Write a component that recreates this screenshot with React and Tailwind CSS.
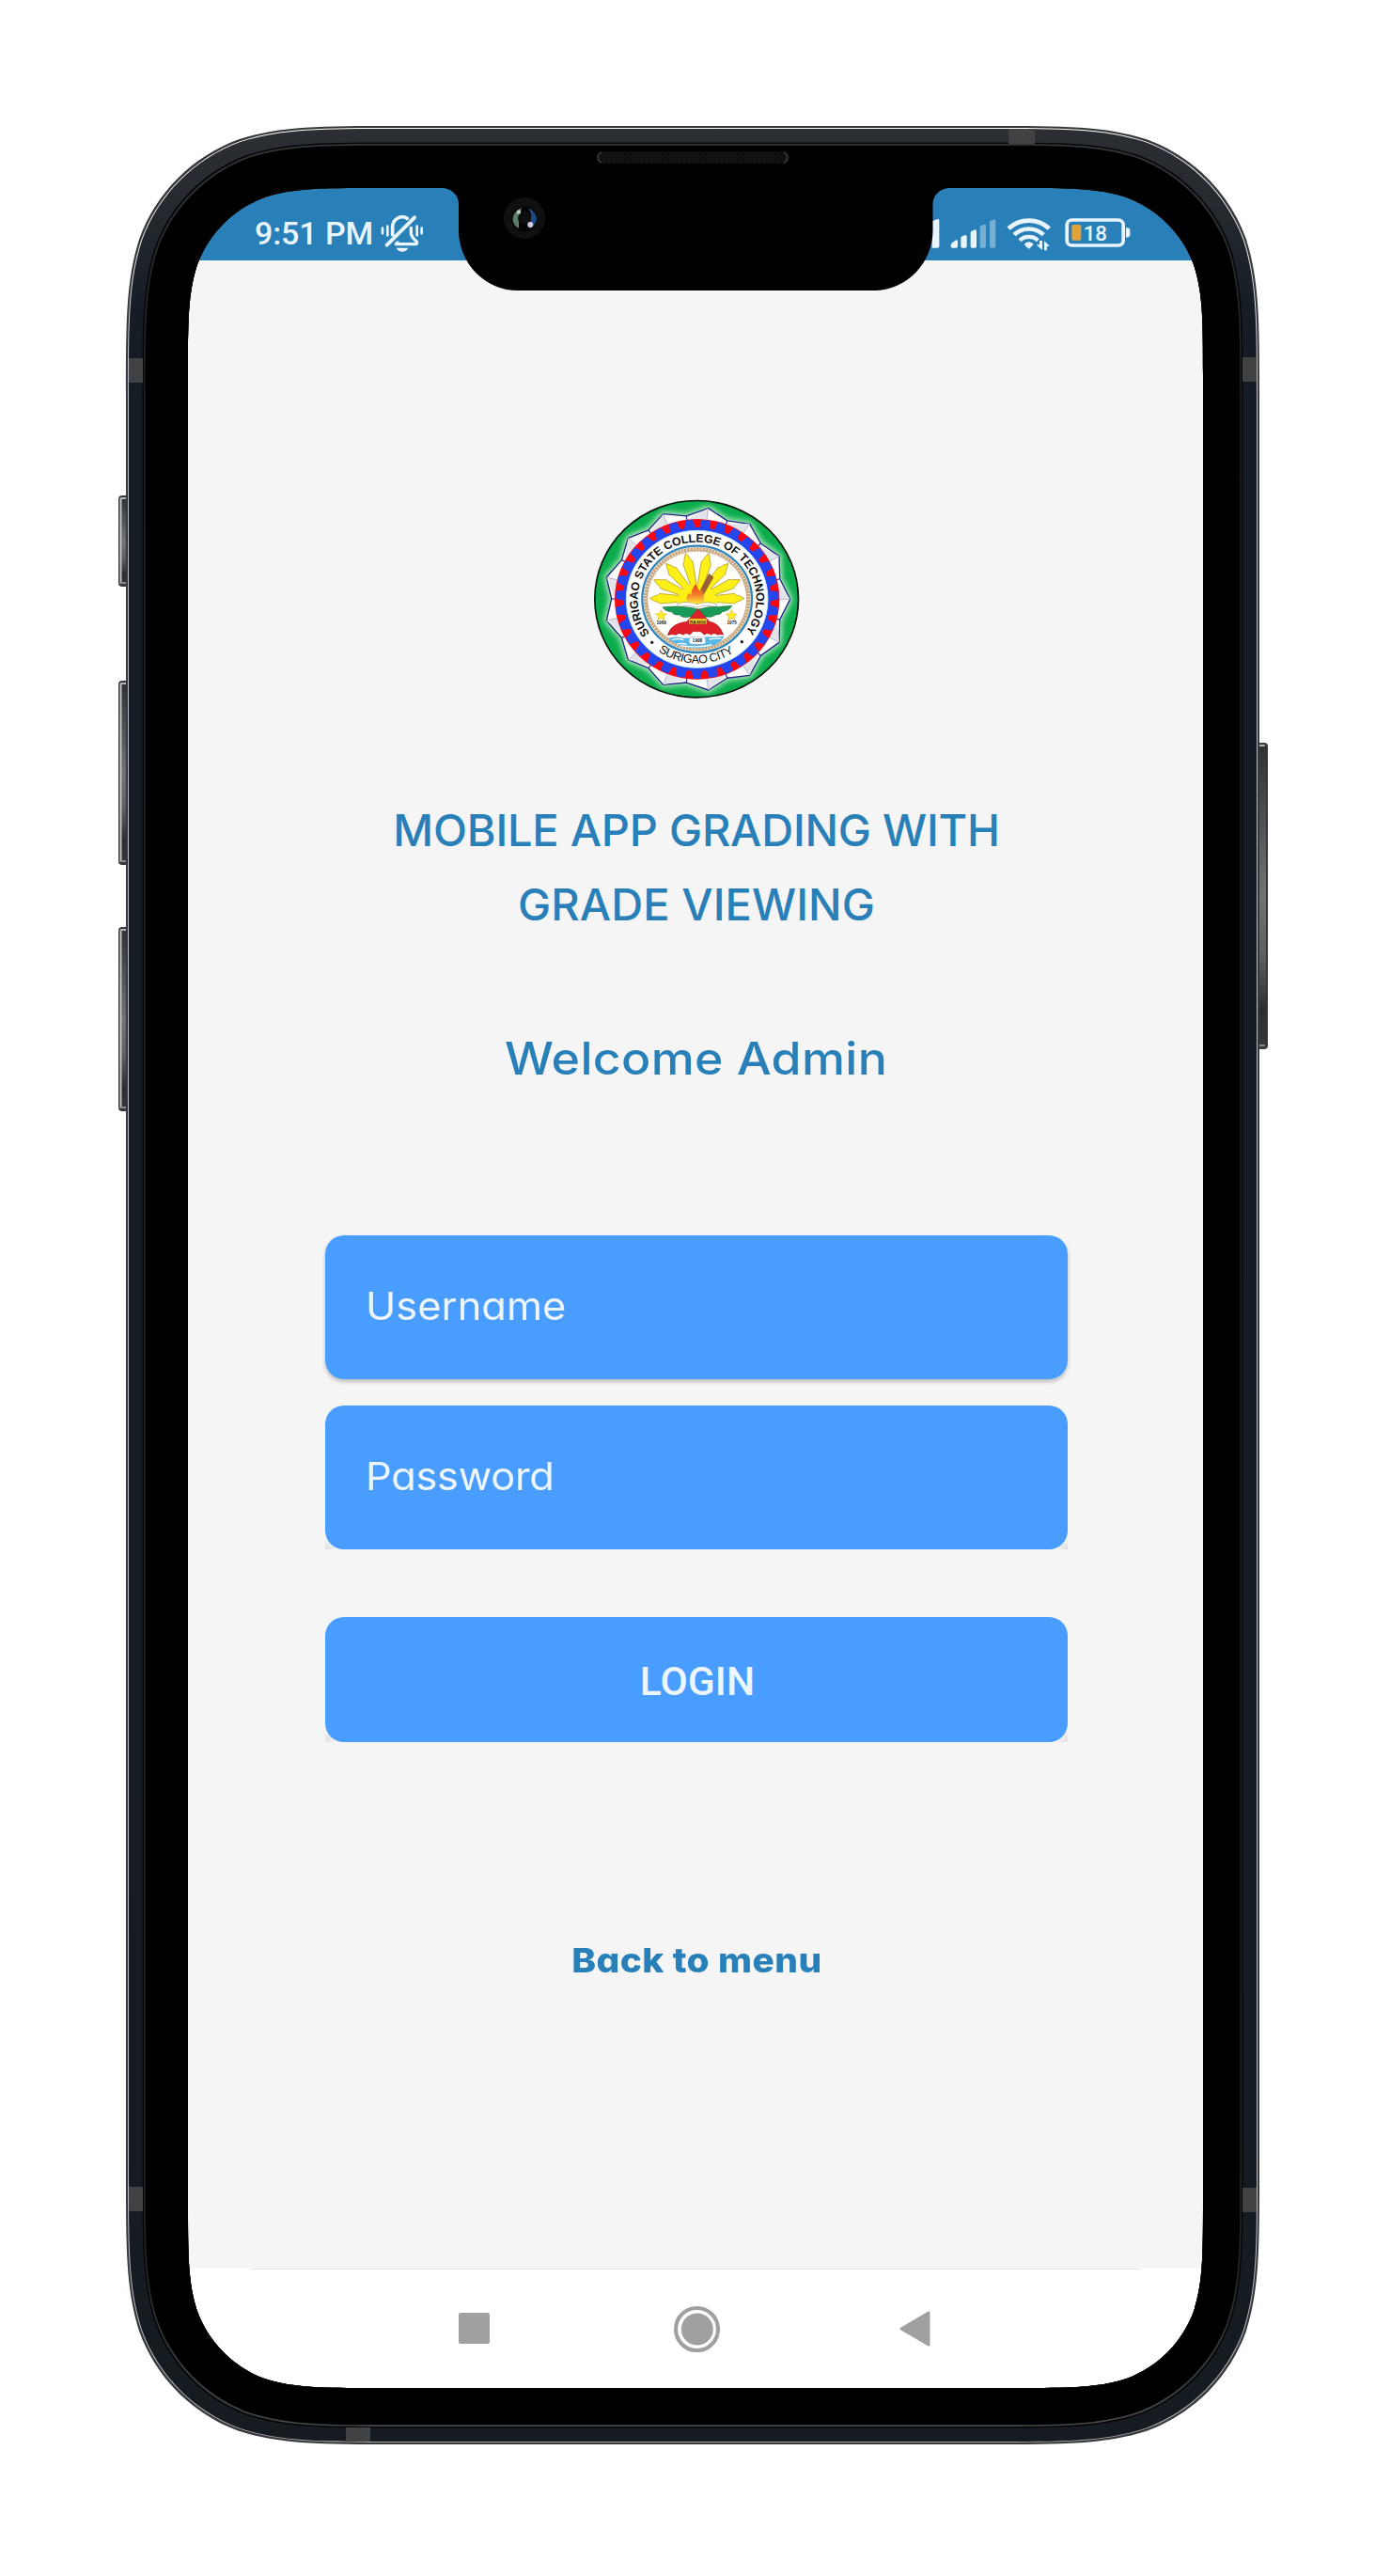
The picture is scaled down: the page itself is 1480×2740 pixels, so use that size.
const K = 1.52866498;

// Continuous-curvature rounded rectangle.
function smoothRect(x, y, w, h, r) {
  const R = x + w;
  const B = y + h;
  const a = K * r;
  const b = 1.08849296 * r;
  const c = 0.86840694 * r;
  const d = 0.63149379 * r;
  const e = 0.07491139 * r;
  const f = 0.37282383 * r;
  const g = 0.16905956 * r;
  return [
    `M${x + a} ${y}L${R - a} ${y}`,
    `C${R - b} ${y} ${R - c} ${y} ${R - d} ${y + e}`,
    `C${R - f} ${y + g} ${R - g} ${y + f} ${R - e} ${y + d}`,
    `C${R} ${y + c} ${R} ${y + b} ${R} ${y + a}`,
    `L${R} ${B - a}`,
    `C${R} ${B - b} ${R} ${B - c} ${R - e} ${B - d}`,
    `C${R - g} ${B - f} ${R - f} ${B - g} ${R - d} ${B - e}`,
    `C${R - c} ${B} ${R - b} ${B} ${R - a} ${B}`,
    `L${x + a} ${B}`,
    `C${x + b} ${B} ${x + c} ${B} ${x + d} ${B - e}`,
    `C${x + f} ${B - g} ${x + g} ${B - f} ${x + e} ${B - d}`,
    `C${x} ${B - c} ${x} ${B - b} ${x} ${B - a}`,
    `L${x} ${y + a}`,
    `C${x} ${y + b} ${x} ${y + c} ${x + e} ${y + d}`,
    `C${x + g} ${y + f} ${x + f} ${y + g} ${x + d} ${y + e}`,
    `C${x + c} ${y} ${x + b} ${y} ${x + a} ${y}Z`,
  ].join("");
}

const SCREEN = smoothRect(200, 200, 1080, 2340, 130);

function SideButton({ x, y, w, h, left }) {
  return (
    <g>
      <rect x={x} y={y} width={w} height={h} rx="4" fill="#38383a" />
      <rect x={left ? x + 1.5 : x} y={y + 2} width={w - 2} height={h - 4} rx="2.5" fill="url(#btnShade)" />
      {left && <rect x={x + 1.5} y={y + 3} width="2" height={h - 6} fill="#c4c4c4" />}
      <rect x={left ? x + 2 : x} y={y + 2} width={w - 3} height="2" rx="1" fill="#b5b5b5" />
      <rect x={left ? x + 2 : x} y={y + h - 5} width={w - 3} height="2" rx="1" fill="#8b8b8b" />
    </g>
  );
}

function PhoneFrame() {
  return (
    <svg className="pointer-events-none absolute inset-0" width="1480" height="2740" viewBox="0 0 1480 2740">
      <defs>
        <linearGradient id="band" x1="0" y1="134" x2="0" y2="2600" gradientUnits="userSpaceOnUse">
          <stop offset="0" stopColor="#2b2e33" />
          <stop offset="0.035" stopColor="#26292f" />
          <stop offset="0.08" stopColor="#161c25" />
          <stop offset="1" stopColor="#161b22" />
        </linearGradient>
        <linearGradient id="btnShade" x1="0" y1="0" x2="0" y2="1">
          <stop offset="0" stopColor="#303032" />
          <stop offset="0.3" stopColor="#56575a" />
          <stop offset="0.5" stopColor="#737373" />
          <stop offset="0.7" stopColor="#5e5e60" />
          <stop offset="0.88" stopColor="#2c2c2e" />
          <stop offset="1" stopColor="#38383a" />
        </linearGradient>
        <linearGradient id="glint" x1="0" y1="134" x2="0" y2="2600" gradientUnits="userSpaceOnUse">
          <stop offset="0" stopColor="#ffffff" />
          <stop offset="0.05" stopColor="#dfe3e3" />
          <stop offset="0.12" stopColor="#b9bbcd" />
          <stop offset="0.9" stopColor="#b9bbcd" />
          <stop offset="1" stopColor="#a5a5a5" />
        </linearGradient>
        <linearGradient id="lip" x1="0" y1="153" x2="0" y2="2582" gradientUnits="userSpaceOnUse">
          <stop offset="0" stopColor="#343536" />
          <stop offset="0.1" stopColor="#1f1f1f" />
          <stop offset="0.93" stopColor="#222222" />
          <stop offset="1" stopColor="#484848" />
        </linearGradient>
      </defs>

      <SideButton left x={126} y={527} w={12} h={97} />
      <SideButton left x={126} y={724} w={12} h={196} />
      <SideButton left x={126} y={986} w={12} h={196} />
      <SideButton x={1338} y={790} w={11} h={326} />

      <path fillRule="evenodd" fill="#38383b" d={smoothRect(134, 134, 1206, 2466, 190) + SCREEN} />
      <path fillRule="evenodd" fill="url(#glint)" d={smoothRect(136, 136, 1202, 2462, 189) + SCREEN} />
      <path fillRule="evenodd" fill="url(#band)" d={smoothRect(137, 137, 1200, 2460, 188) + SCREEN} />
      <path fillRule="evenodd" fill="#06070a" d={smoothRect(151.5, 151.5, 1171, 2431, 177) + SCREEN} />
      <path fillRule="evenodd" fill="url(#lip)" d={smoothRect(153, 153, 1168, 2428, 176) + SCREEN} />
      <path fillRule="evenodd" fill="#000" d={smoothRect(154.7, 154.7, 1164.6, 2424.6, 175) + SCREEN} />
      <g fill="#414243">
        <rect x="1073" y="137" width="28" height="16" />
        <rect x="137" y="381" width="15" height="26" />
        <rect x="1322" y="380" width="15" height="26" />
        <rect x="137" y="2326" width="15" height="26" />
        <rect x="1322" y="2327" width="15" height="26" />
        <rect x="368" y="2582" width="26" height="15" />
      </g>

      <path
        fill="#000"
        d="M470 199V200A18 17 0 0 1 488 217V245A63 64 0 0 0 551 309H930A63 64 0 0 0 992.5 245V217A18 17 0 0 1 1010 200V199Z"
      />

      <rect x="634" y="161" width="206" height="13" rx="6.5" fill="#101010" />
      <path d="M640 162A6 6 0 0 0 640 173M834 162A6 6 0 0 1 834 173" stroke="#3a3a3a" strokeWidth="1.5" fill="none" />
      <path d="M642 165H832M642 169.500H832" stroke="#171717" strokeWidth="2" strokeDasharray="2 3" />

      <circle cx="558" cy="232" r="22" fill="#101010" />
      <circle cx="558" cy="233" r="13.5" fill="#030304" />
      <path d="M555 221Q546 225 545.500 233Q546 240 552 243Q552 238 552 232Q553 227 555 221Z" fill="#5c7f6a" />
      <path d="M562 221Q571 225 571 234Q569 240 564 243Q562 238 565 233Q566 227 562 221Z" fill="#1b4a86" />
      <circle cx="558" cy="232" r="7" fill="#100f10" />
      <circle cx="552" cy="225.500" r="2.200" fill="#b9c8bd" />
      <circle cx="564.300" cy="239" r="3" fill="#cfcbe0" />
    </svg>
  );
}

const CX = 365;
const CY = 352;
const pt = (deg, rx, ry) => {
  const t = (deg * Math.PI) / 180;
  return [(CX + rx * Math.sin(t)).toFixed(1), (CY - ry * Math.cos(t)).toFixed(1)];
};
const peaks = [
  [401, 62], [533, 112], [627, 215], [662, 352], [627, 490], [533, 595], [401, 642],
  [257, 625], [145, 545], [76, 420], [76, 282], [145, 157], [257, 80],
];
const valleys = peaks.map(([x, y], i) => {
  const [x2, y2] = peaks[(i + 1) % peaks.length];
  const mx = (x + x2) / 2 - CX;
  const my = (y + y2) / 2 - CY;
  return [CX + mx * 0.945, CY + my * 0.945];
});
const starPath = "M" + peaks.map((p, i) => `${p.join(" ")}L${valleys[i].join(" ")}`).join("L") + "Z";
const inner = (p, k) => [CX + (p[0] - CX) * k, CY + (p[1] - CY) * k];
const TEETH = 31;
const rayAngles = [-89, -66, -41, -14, 14, 41, 66, 89];

function Seal() {
  return (
    <svg className="block h-[230px] w-[240px]" viewBox="0 0 720 690">
      <defs>
        <path id="arcTop" d={`M${pt(-127, 189, 182).join(" ")}A189 182 0 1 1 ${pt(126, 189, 182).join(" ")}`} />
        <path id="arcBottom" d={`M${pt(-144, 211, 205).join(" ")}A211 205 0 0 0 ${pt(144, 211, 205).join(" ")}`} />
        <filter id="glow" x="-10%" y="-10%" width="120%" height="120%">
          <feGaussianBlur stdDeviation="9" />
        </filter>
        <linearGradient id="flame" x1="0" y1="0" x2="0" y2="1">
          <stop offset="0" stopColor="#e8401c" />
          <stop offset="0.55" stopColor="#f47a2a" />
          <stop offset="1" stopColor="#fde23a" />
        </linearGradient>
      </defs>
      <ellipse cx="363.500" cy="351.500" rx="325" ry="314" fill="#0aac4b" stroke="#06120a" strokeWidth="5" />
      <path d={starPath} fill="#fff" stroke="#e8fbe8" strokeWidth="14" filter="url(#glow)" opacity="0.85" />
      <path d={starPath} fill="#fdfdff" stroke="#26267f" strokeWidth="4" strokeLinejoin="round" />
      {peaks.map((p, i) => {
        const v = valleys[i];
        const u = valleys[(i + 12) % 13];
        const base = inner(p, 0.88);
        return (
          <g key={i}>
            <path d={`M${p.join(" ")}L${base.join(" ")}L${inner(u, 0.96).join(" ")}Z`} fill="#e3e3ea" />
            <path d={`M${p.join(" ")}L${base.join(" ")}`} stroke="#9a9ab8" strokeWidth="2" />
            <path d={`M${v.join(" ")}L${inner(v, 0.92).join(" ")}`} stroke="#26267f" strokeWidth="3.500" />
          </g>
        );
      })}
      <ellipse cx={CX} cy={CY} rx="263" ry="256" fill="#fb0712" />
      <ellipse cx={CX} cy={CY} rx="236" ry="229" fill="#2546ee" />
      {Array.from({ length: TEETH }, (_, i) => {
        const m = 6 + (i * 360) / TEETH;
        const q = [pt(m - 4.200, 234, 227), pt(m - 2.700, 261, 254), pt(m + 2.700, 261, 254), pt(m + 4.200, 234, 227)];
        return <path key={i} d={"M" + q.map((s) => s.join(" ")).join("L") + "Z"} fill="#2546ee" />;
      })}
      <ellipse cx={CX} cy={CY} rx="226" ry="219" fill="#fff" stroke="#bfe9fb" strokeWidth="3" />
      <ellipse cx={CX} cy={CY} rx="175" ry="170" fill="#fff" stroke="#2f86bd" strokeWidth="7" />
      <ellipse cx={CX} cy={CY} rx="165" ry="160" fill="#fffefa" stroke="#c9a57c" strokeWidth="11" />
      <ellipse cx={CX} cy={CY} rx="165" ry="160" fill="none" stroke="#f3e4cf" strokeWidth="10" strokeDasharray="3 7" />
      <ellipse cx={CX} cy={CY} rx="159" ry="154" fill="none" stroke="#9a6b3f" strokeWidth="1.500" />

      <g fontFamily='"Liberation Sans", Arial, sans-serif' fill="#111">
        <text fontSize="37" fontWeight="700">
          <textPath href="#arcTop" textLength="812" lengthAdjust="spacing">SURIGAO STATE COLLEGE OF TECHNOLOGY</textPath>
        </text>
        <text fontSize="38">
          <textPath href="#arcBottom" textLength="257" lengthAdjust="spacing">SURIGAO CITY</textPath>
        </text>
      </g>
      <circle cx="221" cy="490" r="5" fill="#111" />
      <circle cx="508" cy="488" r="5" fill="#111" />

      <g fill="#fdf019" stroke="#a98f1c" strokeWidth="2" strokeLinejoin="round">
        {rayAngles.map((a) => (
          <path key={a} transform={`translate(365 352) rotate(${a})`} d="M-9 -40L-16 -120L-11 -126L-8 -136L0 -151L8 -136L11 -126L16 -120L9 -40Z" />
        ))}
        <path d="M302 362A63 60 0 0 1 428 362L412 372L318 370Z" stroke="none" />
      </g>
      <path d="M302 366Q335 356 365 368Q398 356 428 368L424 377Q395 368 365 378Q335 368 306 376Z" fill="#fff" stroke="#777" strokeWidth="1.500" />
      <path d="M403 271L417 282L383 341L371 333Z" fill="#9c6238" stroke="#6b4122" strokeWidth="1.500" />
      <path d="M334 360Q326 344 341 332Q344 338 346 340Q346 318 362 303Q366 318 374 326Q377 322 378 316Q390 340 386 360Q360 370 334 360Z" fill="url(#flame)" />

      <path d="M255 377Q300 372 345 379L370 384Q400 374 436 376L477 373Q466 390 446 392Q440 402 424 402Q412 412 396 408L342 408Q320 414 308 402Q290 404 284 392Q264 392 255 377Z" fill="#1a9a57" stroke="#0e6b39" strokeWidth="1.500" />
      <path d="M368 383L405 424Q436 428 449 466Q440 462 430 466Q420 456 410 466Q398 456 388 466Q376 450 364 456Q352 450 342 466Q330 456 320 466Q308 456 298 466Q284 462 271 467Q282 428 332 424Z" fill="#df2029" stroke="#8e1319" strokeWidth="1.500" />
      <rect x="339" y="414" width="57" height="17" fill="#f3d02c" stroke="#7a5c00" strokeWidth="1" />
      <path d="M272 478Q290 470 310 474Q330 480 350 472Q372 478 396 472Q430 474 452 470Q440 492 412 502Q364 516 310 500Q284 490 272 478Z" fill="#57b7e6" />
      <path d="M284 482Q304 476 322 482M404 480Q424 476 442 478M300 496Q316 490 332 496M312 500Q360 508 412 498" stroke="#fff" strokeWidth="4" fill="none" />
      <rect x="340" y="473" width="52" height="22" rx="9" fill="#fff" stroke="#bbb" strokeWidth="1.500" />
      {[250, 475].map((x) => (
        <path key={x} transform={`translate(${x} 404)`} d="M0 -18L5 -6L18 -5L8 3L11 15L0 8L-11 15L-8 3L-18 -5L-5 -6Z" fill="#fdee1c" stroke="#c8a91c" strokeWidth="1.500" />
      ))}
      <g fontFamily='"Liberation Sans", Arial, sans-serif' fontSize="14" fontWeight="700" fill="#222" textAnchor="middle">
        <text x="251" y="432">1969</text>
        <text x="476" y="432">1975</text>
        <text x="366" y="489">1998</text>
        <text x="367.500" y="427.500" fontSize="13">RA 8650</text>
      </g>
    </svg>
  );
}

function BellOff() {
  return (
    <svg className="h-[42px] w-[47px]" viewBox="855 320 141 126" fill="none" stroke="#e9f5fd" strokeLinecap="round" strokeLinejoin="round">
      <path d="M963 333L875 421" strokeWidth="11.500" />
      <path d="M893 388V364A31 32 0 0 1 940 336" strokeWidth="11" />
      <path d="M952 366V384Q953 395 970 410Q973 418 966 418H904L909 413" strokeWidth="10" />
      <path d="M905 430H943Q937 442 924 442Q911 442 905 430Z" fill="#e9f5fd" stroke="none" />
      <path d="M861 367V384M877 361V390M971 361V390M986 367V384" strokeWidth="8" />
    </svg>
  );
}

function SignalSecondary() {
  return (
    <svg className="h-[42px] w-[10px]" viewBox="94 320 30 126" fill="#e9f5fd">
      <path d="M96 345Q104 340 115 338Q119 338 119 343V424Q119 430 113 430H96Z" />
    </svg>
  );
}

function Signal() {
  const bar = (x, top) => `M${x} ${top + 9}Q${x} ${top + 5} ${x + 4} ${top + 4}L${x + 14} ${top}Q${x + 19} ${top - 1} ${x + 19} ${top + 5}V425Q${x + 19} 430 ${x + 14} 430H${x + 5}Q${x} 430 ${x} 425Z`;
  return (
    <svg className="h-[42px] w-[49px]" viewBox="155 320 147 126" fill="#e9f5fd">
      <path d="M157 424Q156 418 162 413L172 406Q179 403 179 409V425Q179 430 174 430H162Q157 430 157 424Z" />
      <path d={bar(189, 389)} />
      <path d={bar(220, 372)} />
      <g fillOpacity="0.4">
        <path d={bar(250, 355)} />
        <path d={bar(281, 339)} />
      </g>
    </svg>
  );
}

function Wifi() {
  return (
    <svg className="h-[42px] w-[48px]" viewBox="337 320 144 126" fill="none" stroke="#e9f5fd">
      <path d="M343 368A96 96 0 0 1 473 368" strokeWidth="14.500" />
      <path d="M361 388A68 68 0 0 1 455 388" strokeWidth="13.500" />
      <path d="M379 406A42 42 0 0 1 437 406" strokeWidth="12.500" />
      <path d="M393 419Q398 411 408 411Q418 411 423 419L411 431Q408 434 405 431Z" fill="#e9f5fd" stroke="none" />
      <path d="M434 418L448 434V408M461 438V411L474 426" stroke="#2980b9" strokeWidth="12" />
      <path d="M451 407V437L432 420H442V407ZM457 438V408L475 424H466V438Z" fill="#e9f5fd" stroke="none" />
    </svg>
  );
}

function Battery() {
  return (
    <svg className="h-[42px] w-[70px]" viewBox="521 320 210 126">
      <rect x="527.500" y="341" width="180" height="81" rx="16" fill="none" stroke="#e9f5fd" strokeWidth="11" />
      <rect x="543" y="356" width="30" height="50" rx="6" fill="#e1a336" />
      <path d="M716 368Q716 365 719 365Q729 367 729 373V389Q729 395 719 397Q716 397 716 394Z" fill="#e9f5fd" />
      <text x="580" y="407" fontFamily="Roboto, sans-serif" fontWeight="500" fontSize="67" fill="#e9f5fd" textLength="76">18</text>
    </svg>
  );
}

function StatusBar() {
  return (
    <header className="flex h-[77px] items-start justify-between bg-[#2980b9] pr-[77px] pl-[71px] pt-[27px] text-[#e9f5fd]">
      <div className="flex items-start">
        <span className="font-[Roboto,sans-serif] text-[34px] leading-[42px] font-medium tracking-[-0.1px]">9:51 PM</span>
        <span className="ml-[8px]"><BellOff /></span>
      </div>
      <div className="flex items-start">
        <SignalSecondary />
        <span className="ml-[10px]"><Signal /></span>
        <span className="ml-[11px]"><Wifi /></span>
        <span className="ml-[14px]"><Battery /></span>
      </div>
    </header>
  );
}

function Field({ children }) {
  return (
    <div className="flex w-full items-center rounded-[20px] bg-[#489dff] pb-[2px] pl-[43px] text-[41px] text-[#edf5fd]">
      {children}
    </div>
  );
}

function NavBar() {
  return (
    <nav className="flex h-[127px] flex-col bg-white">
      <div className="mx-[67px] h-px bg-[#e4e4e4]" />
      <div className="flex h-[130px] items-center pl-[288px]">
        <div className="size-[33px] rounded-[2px] bg-[#a0a0a0]" />
        <svg className="ml-[195px] size-[50px]" viewBox="0 0 50 50">
          <circle cx="25.500" cy="25.500" r="22.500" fill="none" stroke="#a0a0a0" strokeWidth="4.200" />
          <circle cx="25.800" cy="25.500" r="17" fill="#a0a0a0" />
        </svg>
        <svg className="ml-[191px] h-[38px] w-[34px]" viewBox="0 0 34 38">
          <path d="M2 19L31 2V36Z" fill="#a0a0a0" stroke="#a0a0a0" strokeWidth="3" strokeLinejoin="round" />
        </svg>
      </div>
    </nav>
  );
}

export default function App() {
  return (
    <div className="relative h-[2740px] w-[1480px] overflow-hidden bg-white p-[200px] font-[Inter,sans-serif] [font-feature-settings:'cv11']">
      <div className="flex h-[2340px] w-[1080px] flex-col overflow-hidden rounded-[110px] bg-[#f5f5f5]">
        <StatusBar />
        <main className="flex flex-1 flex-col items-center pl-[2px]">
          <div className="mt-[243px] mr-[2px]">
            <Seal />
          </div>
          <h1 className="mt-[93px] text-center text-[47px] leading-[79px] font-medium text-[#2980b9]">
            <span className="block tracking-[-0.23px]">MOBILE APP GRADING WITH</span>
            <span className="block tracking-[0.08px]">GRADE VIEWING</span>
          </h1>
          <h2 className="mt-[85px] scale-x-[1.08] text-center text-[48px] leading-[79px] font-medium tracking-[0.3px] text-[#2980b9]">Welcome Admin</h2>
          <form className="mt-[149px] flex w-[790px] flex-col">
            <div className="flex h-[153px] rounded-[20px] shadow-[0_3px_4px_rgba(0,0,0,0.22)]">
              <Field><span className="origin-left scale-x-[1.06]">Username</span></Field>
            </div>
            <div className="mt-[28px] flex h-[153px] bg-[radial-gradient(circle_at_bottom_left,#dedede_0,transparent_12px),radial-gradient(circle_at_bottom_right,#dedede_0,transparent_12px)]">
              <Field><span className="origin-left scale-x-[1.06] tracking-[-0.3px]">Password</span></Field>
            </div>
            <div className="mt-[72px] flex h-[133px] bg-[radial-gradient(circle_at_bottom_left,#dedede_0,transparent_12px),radial-gradient(circle_at_bottom_right,#dedede_0,transparent_12px)]">
              <button type="button" className="w-full rounded-[20px] bg-[#489dff] pt-[4px] pl-[2px] font-[Roboto,sans-serif] text-[42.5px] font-medium tracking-[0.1px] text-[#edf5fd]">LOGIN</button>
            </div>
          </form>
          <a className="mt-[212px] pl-[1px] scale-x-[1.08] text-[36px] leading-[40px] font-extrabold tracking-[0.4px] text-[#2980b9]">Back to menu</a>
        </main>
        <NavBar />
      </div>
      <PhoneFrame />
    </div>
  );
}
